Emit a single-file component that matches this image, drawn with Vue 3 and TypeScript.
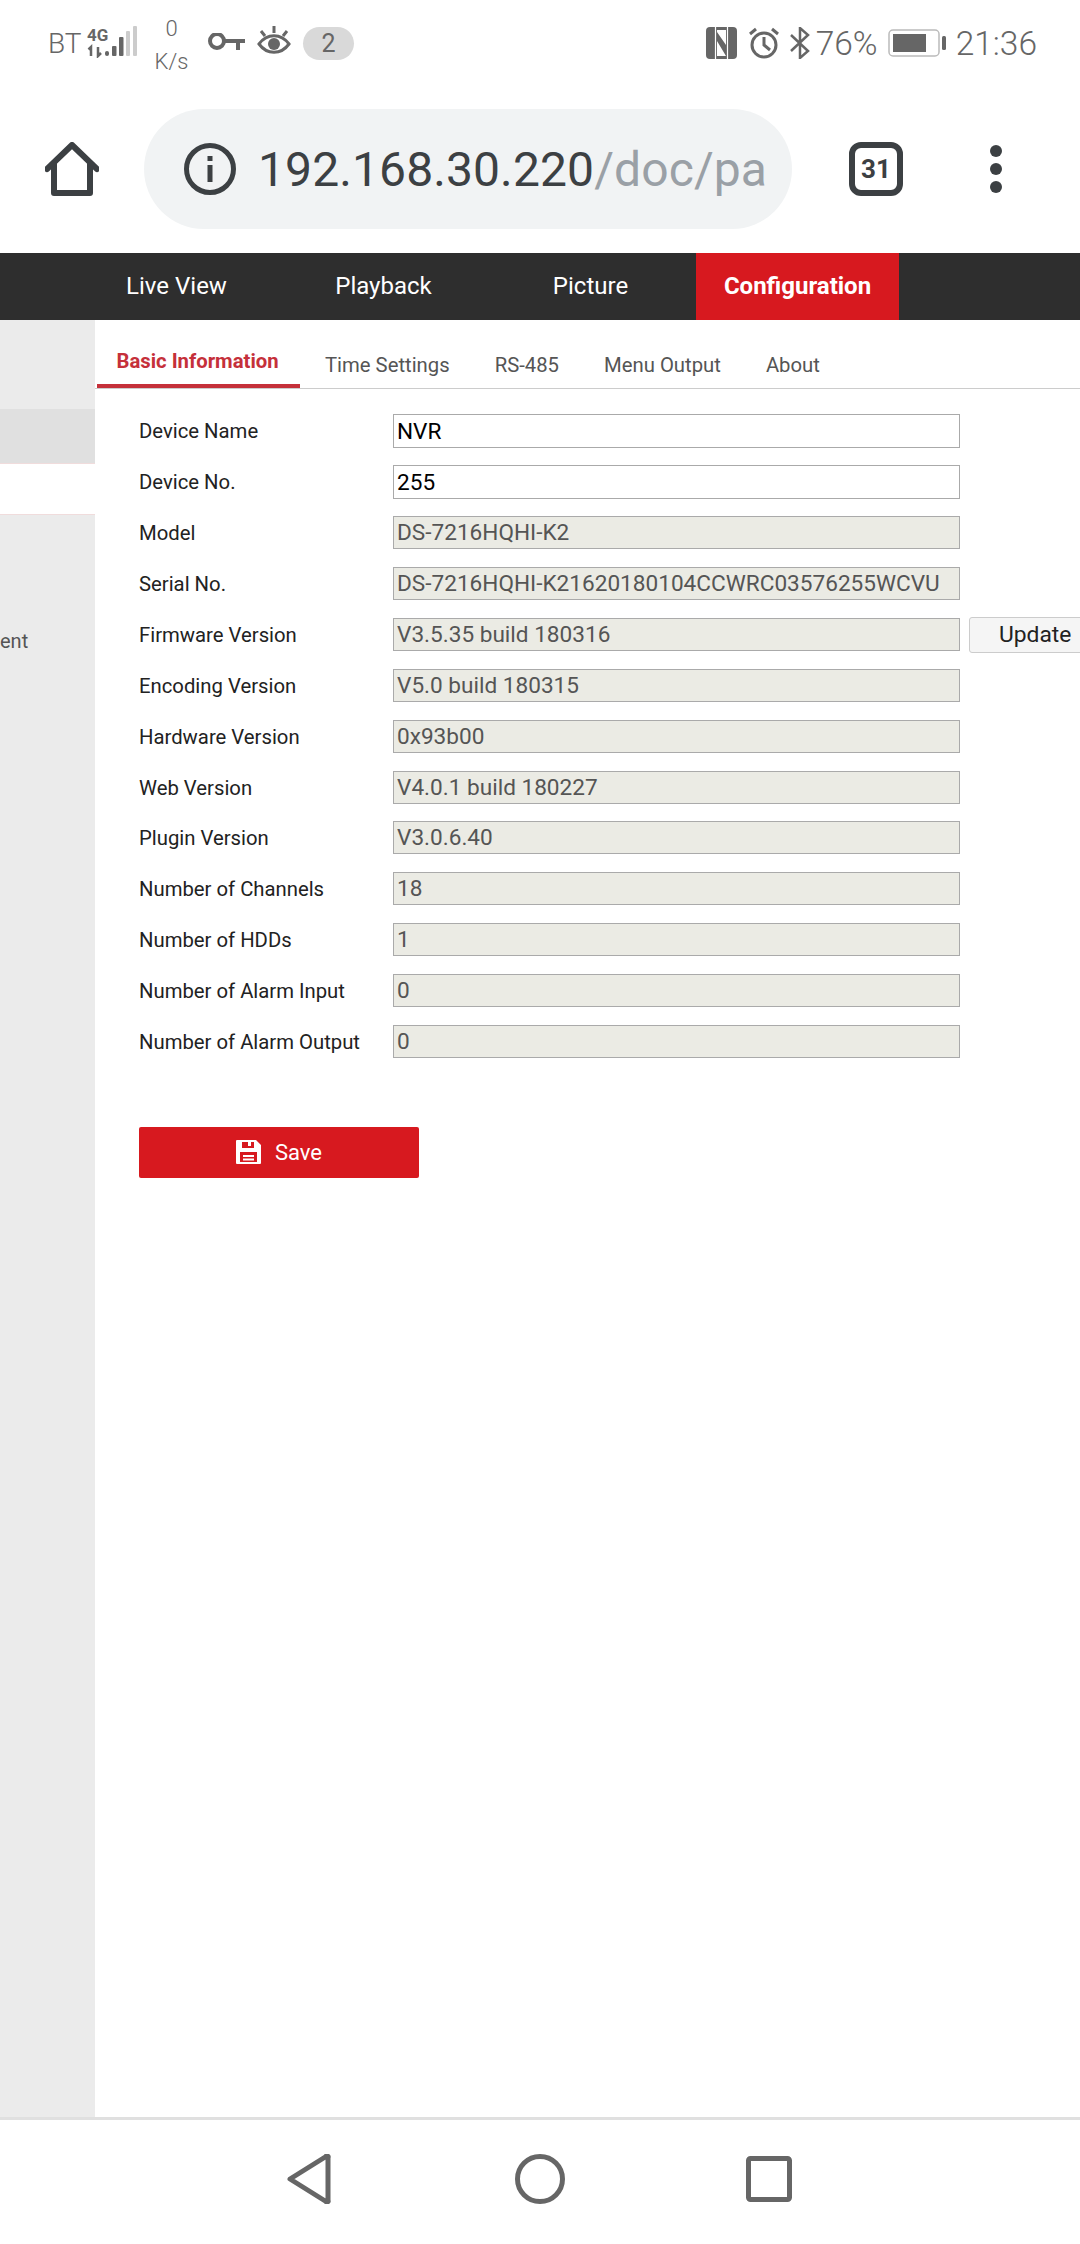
<script setup lang="ts">
interface InfoRow {
  label: string;
  value: string;
  editable?: boolean;
  update?: boolean;
}

const navItems = ["Live View", "Playback", "Picture", "Configuration"];
const subTabs = ["Basic Information", "Time Settings", "RS-485", "Menu Output", "About"];

const rows: InfoRow[] = [
  { label: "Device Name", value: "NVR", editable: true },
  { label: "Device No.", value: "255", editable: true },
  { label: "Model", value: "DS-7216HQHI-K2" },
  { label: "Serial No.", value: "DS-7216HQHI-K21620180104CCWRC03576255WCVU" },
  { label: "Firmware Version", value: "V3.5.35 build 180316", update: true },
  { label: "Encoding Version", value: "V5.0 build 180315" },
  { label: "Hardware Version", value: "0x93b00" },
  { label: "Web Version", value: "V4.0.1 build 180227" },
  { label: "Plugin Version", value: "V3.0.6.40" },
  { label: "Number of Channels", value: "18" },
  { label: "Number of HDDs", value: "1" },
  { label: "Number of Alarm Input", value: "0" },
  { label: "Number of Alarm Output", value: "0" },
];
</script>

<template>
  <div class="phone">
    <div class="status">
      <div class="status__left">
        <span class="status__carrier">BT</span>
        <svg class="status__signal" width="52" height="32" viewBox="0 0 52 32">
          <text x="1" y="15" class="status__lte">4G</text>
          <path d="M5 30v-9l-2.500 2.500M12 21v9l3-3" fill="none" stroke="#666" stroke-width="2.500" />
          <rect x="19" y="25" width="4" height="5" rx="2" fill="#666" />
          <rect x="26" y="20" width="4.500" height="10" rx="1" fill="#666" />
          <rect x="33" y="11" width="4.500" height="19" rx="1" fill="#666" />
          <rect x="40" y="5" width="4" height="25" rx="1" fill="#ccc" />
          <rect x="47" y="0" width="4" height="30" rx="1" fill="#ccc" />
        </svg>
        <div class="status__speed"><span>0</span><span>K/s</span></div>
        <svg class="status__key" width="38" height="20" viewBox="0 0 38 20">
          <circle cx="10" cy="8" r="7" fill="none" stroke="#666" stroke-width="4" />
          <path d="M16 8h22M31 8v9" fill="none" stroke="#666" stroke-width="4" />
        </svg>
        <svg class="status__eye" width="34" height="32" viewBox="0 0 34 32">
          <path d="M2 19c8-11 22-11 30 0-8 11-22 11-30 0z" fill="none" stroke="#666" stroke-width="3" />
          <circle cx="17" cy="19" r="6" fill="#666" />
          <path d="M17 1v7M4 6l4 5M30 6l-4 5" fill="none" stroke="#666" stroke-width="3" />
        </svg>
        <span class="status__badge">2</span>
      </div>
      <div class="status__right">
        <svg width="31" height="32" viewBox="0 0 31 32">
          <rect width="31" height="32" rx="4" fill="#666" />
          <path d="M11 3h9v15L11 5zM11 14l9 15h-9z" fill="#fff" />
          <path d="M9.500 0v32M21.500 0v32" stroke="#fff" stroke-width="1.200" />
        </svg>
        <svg class="status__alarm" width="32" height="32" viewBox="0 0 32 32">
          <circle cx="16" cy="18" r="12" fill="none" stroke="#666" stroke-width="3" />
          <path d="M16 10v8l6 5M2 7l6-5M30 7l-6-5" fill="none" stroke="#666" stroke-width="3" />
        </svg>
        <svg class="status__bt" width="20" height="32" viewBox="0 0 20 32">
          <path d="M1 8l17 16-8 7V1l8 7L1 24" fill="none" stroke="#666" stroke-width="2.500" />
        </svg>
        <span class="status__pct">76%</span>
        <svg class="status__battery" width="58" height="28" viewBox="0 0 58 28">
          <rect x="1" y="1" width="50" height="26" rx="4" fill="none" stroke="#bbb" stroke-width="1.500" />
          <rect x="5" y="5" width="33" height="18" fill="#666" />
          <rect x="54" y="7" width="4" height="14" rx="1.500" fill="#666" />
        </svg>
        <span class="status__time">21:36</span>
      </div>
    </div>

    <div class="toolbar">
      <svg class="toolbar__home" width="54" height="54" viewBox="0 0 54 54">
        <path d="M2 27L27 3l25 24M9 21v30h36V21" fill="none" stroke="#3c4043" stroke-width="6" stroke-linejoin="round" stroke-linecap="round" />
      </svg>
      <div class="url">
        <svg class="url__info" width="52" height="52" viewBox="0 0 52 52">
          <circle cx="26" cy="26" r="23.500" fill="none" stroke="#3c4043" stroke-width="5" />
          <rect x="23.500" y="13" width="5" height="5" fill="#3c4043" />
          <rect x="23.500" y="22" width="5" height="17" fill="#3c4043" />
        </svg>
        <span class="url__host">192.168.30.220</span><span class="url__path">/doc/pa</span>
      </div>
      <div class="toolbar__tabs">31</div>
      <div class="toolbar__menu"><i></i><i></i><i></i></div>
    </div>

    <nav class="nav">
      <div
        v-for="item in navItems"
        :key="item"
        class="nav__item"
        :class="{ 'nav__item--active': item === 'Configuration' }"
      >
        {{ item }}
      </div>
    </nav>

    <div class="main">
      <aside class="side">
        <div class="side__selected"></div>
        <div class="side__open"></div>
        <div class="side__label">ent</div>
      </aside>

      <section class="content">
        <div class="tabs">
          <div
            v-for="(tab, i) in subTabs"
            :key="tab"
            class="tabs__item"
            :class="{ 'tabs__item--active': i === 0 }"
          >
            {{ tab }}
          </div>
        </div>

        <div class="form">
          <div v-for="row in rows" :key="row.label" class="form__row">
            <label class="form__label">{{ row.label }}</label>
            <input
              class="form__input"
              type="text"
              :value="row.value"
              :disabled="!row.editable"
            />
            <button v-if="row.update" class="form__update">Update</button>
          </div>
        </div>

        <button class="save">
          <svg width="25" height="24" viewBox="0 0 25 24">
            <path
              fill-rule="evenodd"
              d="M1 0h19l5 5v18a1 1 0 0 1-1 1H1a1 1 0 0 1-1-1V1a1 1 0 0 1 1-1zM6 2v6h12V2h-3v4h-3V2zM4 12v10h17V12zM7 15h11v2H7zM7 18.500h11v2H7z"
              fill="#fff"
            />
          </svg>
          <span>Save</span>
        </button>
      </section>
    </div>

    <div class="softkeys">
      <svg width="44" height="50" viewBox="0 0 44 50">
        <path d="M3 25L39 2.500a1 1 0 0 1 2 1v43a1 1 0 0 1-2 1z" fill="none" stroke="#666" stroke-width="5" stroke-linejoin="round" />
      </svg>
      <svg width="50" height="50" viewBox="0 0 50 50">
        <circle cx="25" cy="25" r="22.500" fill="none" stroke="#666" stroke-width="5" />
      </svg>
      <svg class="softkeys__recent" width="46" height="46" viewBox="0 0 46 46">
        <rect x="2.500" y="2.500" width="41" height="41" rx="2" fill="none" stroke="#666" stroke-width="5" />
      </svg>
    </div>
  </div>
</template>

<style scoped>
.phone {
  width: 1080px;
  height: 2244px;
  display: flex;
  flex-direction: column;
  overflow: hidden;
  background: #fff;
  font-family: Roboto, "Liberation Sans", sans-serif;
}

.status {
  height: 100px;
  flex: none;
  display: flex;
  justify-content: space-between;
  align-items: center;
  padding: 0 43px 14px 48px;
  box-sizing: border-box;
  color: #666;
}
.status__left,
.status__right {
  display: flex;
  align-items: center;
}
.status__carrier {
  font-size: 28px;
  font-weight: 300;
  width: 36px;
}
.status__signal {
  margin: -2px 0 0 2px;
}
.status__lte {
  font-size: 17px;
  font-weight: 700;
  fill: #666;
  font-family: "Liberation Sans Narrow", Roboto, sans-serif;
}
.status__speed {
  display: flex;
  flex-direction: column;
  align-items: center;
  width: 33px;
  margin: 3px 0 0 17px;
  font-size: 22px;
  font-weight: 300;
  line-height: 33px;
}
.status__key {
  margin-left: 19px;
}
.status__eye {
  margin: -4px 0 0 12px;
}
.status__badge {
  width: 51px;
  height: 33px;
  margin-left: 12px;
  border-radius: 17px;
  background: #d9d9d9;
  font-size: 25px;
  line-height: 33px;
  text-align: center;
}
.status__alarm {
  margin-left: 11px;
}
.status__bt {
  margin-left: 10px;
}
.status__pct {
  margin-left: 6px;
  font-size: 33.500px;
  font-weight: 300;
}
.status__battery {
  margin-left: 10px;
}
.status__time {
  margin-left: 10px;
  font-size: 33.500px;
  font-weight: 300;
}

.toolbar {
  height: 153px;
  flex: none;
  display: flex;
  align-items: center;
  padding: 0 0 15px 45px;
  box-sizing: border-box;
}
.toolbar__home {
  flex: none;
}
.url {
  width: 648px;
  height: 120px;
  flex: none;
  display: flex;
  align-items: center;
  margin-left: 45px;
  padding-left: 40px;
  box-sizing: border-box;
  border-radius: 60px;
  background: #f1f3f4;
  font-size: 48px;
  letter-spacing: 0.1px;
  white-space: nowrap;
}
.url__info {
  flex: none;
  margin-right: 22px;
}
.url__host {
  color: #3c4043;
}
.url__path {
  color: #9aa0a6;
}
.toolbar__tabs {
  width: 54px;
  height: 54px;
  flex: none;
  margin-left: 57px;
  box-sizing: border-box;
  border: 6px solid #3c4043;
  border-radius: 12px;
  color: #3c4043;
  font-size: 26px;
  font-weight: 700;
  line-height: 42px;
  text-align: center;
}
.toolbar__menu {
  display: flex;
  flex-direction: column;
  gap: 6px;
  margin-left: 87px;
}
.toolbar__menu i {
  width: 12px;
  height: 12px;
  border-radius: 50%;
  background: #3c4043;
}

.nav {
  height: 67px;
  flex: none;
  display: flex;
  gap: 4px;
  padding-left: 75px;
  background: #2e2e2e;
}
.nav__item {
  width: 203px;
  color: #fff;
  font-size: 24px;
  line-height: 67px;
  text-align: center;
}
.nav__item--active {
  background: #d7191f;
  font-weight: 700;
}

.main {
  flex: 1;
  display: flex;
  min-height: 0;
}
.side {
  width: 95px;
  flex: none;
  padding-top: 89px;
  box-sizing: border-box;
  background: #ebebeb;
  overflow: hidden;
}
.side__selected {
  height: 54px;
  background: #e0e0e0;
  border-bottom: 1px solid #f0dcdc;
}
.side__open {
  height: 50px;
  background: #fff;
  border-bottom: 1px solid #f0dcdc;
}
.side__label {
  margin-top: 112px;
  color: #555;
  font-size: 20px;
  line-height: 28px;
}

.content {
  flex: 1;
  min-width: 0;
  overflow: hidden;
}
.tabs {
  height: 69px;
  display: flex;
  align-items: flex-end;
  padding-left: 1.5px;
  box-sizing: border-box;
  border-bottom: 1px solid #ccc;
}
.tabs__item {
  margin-right: 45px;
  padding-bottom: 11px;
  color: #555;
  font-size: 20.300px;
  line-height: 24px;
}
.tabs__item--active {
  width: 203.5px;
  box-sizing: border-box;
  margin-right: 25px;
  padding: 5px 0 5px 20px;
  height: 46px;
  border-bottom: 4px solid #c5303a;
  color: #c5303a;
  font-weight: 700;
  line-height: 28px;
  white-space: nowrap;
}
.tabs__item:last-child {
  margin-right: 0;
}

.form {
  padding: 25.300px 0 0 44px;
}
.form__row {
  height: 50.900px;
  display: flex;
  align-items: flex-start;
}
.form__label {
  width: 254px;
  flex: none;
  color: #222;
  font-size: 20.300px;
  line-height: 34px;
}
.form__input {
  width: 567px;
  height: 34px;
  flex: none;
  margin: 0;
  padding: 0 3px;
  box-sizing: border-box;
  border: 1.500px solid #aaa;
  border-radius: 0;
  outline: none;
  background: #fff;
  color: #000;
  font-family: inherit;
  font-size: 22.600px;
}
.form__input:disabled {
  height: 33px;
  background: #ebebe4;
  color: #555;
}
.form__update {
  width: 160px;
  height: 36px;
  flex: none;
  margin: -1px 0 0 9px;
  padding: 0;
  border: 1.500px solid #ccc;
  border-radius: 3px;
  background: #f5f5f5;
  color: #222;
  font-family: inherit;
  font-size: 22.800px;
  text-align: left;
  text-indent: 29px;
}

.save {
  width: 280px;
  height: 51px;
  display: flex;
  align-items: center;
  justify-content: center;
  gap: 14px;
  margin: 50.700px 0 0 44px;
  padding: 0;
  border: none;
  border-radius: 2px;
  background: #d7191f;
  color: #fff;
  font-family: inherit;
  font-size: 22px;
}

.softkeys {
  height: 127px;
  flex: none;
  box-sizing: border-box;
  display: flex;
  align-items: center;
  padding: 0 0 6px 287px;
  gap: 184px;
  border-top: 3px solid #e0e0e0;
}
.softkeys__recent {
  margin-left: -3px;
}
</style>
